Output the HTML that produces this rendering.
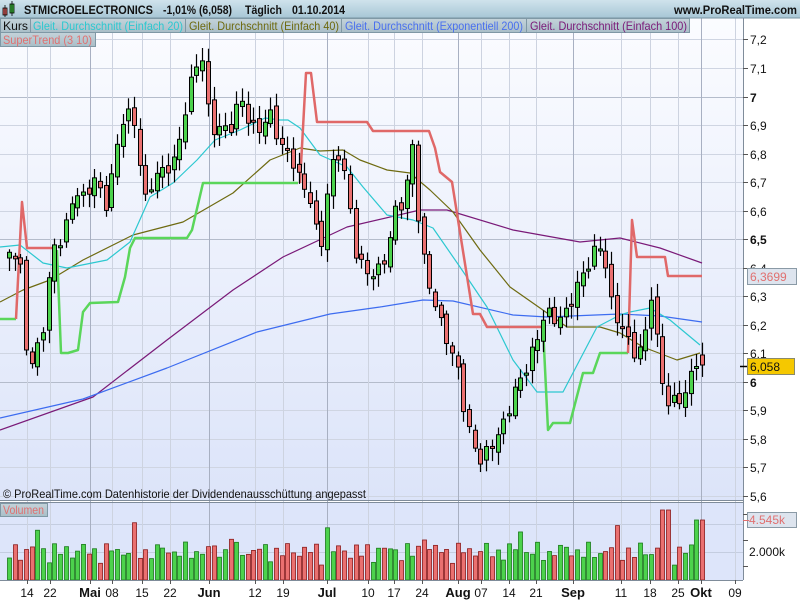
<!DOCTYPE html>
<html><head><meta charset="utf-8"><style>
*{margin:0;padding:0}
body{width:800px;height:600px;overflow:hidden;background:#fff;font-family:"Liberation Sans",sans-serif;}
svg{position:absolute;left:0;top:0}
</style></head><body>
<svg id="s" width="800" height="600" xmlns="http://www.w3.org/2000/svg" font-family="Liberation Sans, sans-serif">
<defs>
<linearGradient id="hd" x1="0" y1="0" x2="0" y2="1"><stop offset="0" stop-color="#cfe3ec"/><stop offset="1" stop-color="#a7c6d5"/></linearGradient>
<linearGradient id="bg" x1="0" y1="0" x2="0" y2="1"><stop offset="0" stop-color="#fbfcff"/><stop offset="1" stop-color="#dce4f9"/></linearGradient>
<linearGradient id="lg" x1="0" y1="0" x2="0" y2="1"><stop offset="0" stop-color="#c4d3da"/><stop offset="1" stop-color="#a9bec8"/></linearGradient>
</defs>
<rect x="0" y="0" width="800" height="600" fill="#fff"/>
<rect x="0" y="18" width="743" height="482" fill="url(#bg)"/>
<rect x="0" y="503" width="743" height="77" fill="#dde5fa"/>
<g id="grid"></g>
<g id="lines"></g>
<g id="candles"></g>
<g id="vol"></g>
<rect x="0" y="0" width="800" height="18" fill="url(#hd)"/>
<line x1="0" y1="18" x2="800" y2="18" stroke="#7a95a3"/>
<rect x="3" y="8" width="4" height="7" fill="#e66" stroke="#000" stroke-width="0.8"/>
<line x1="5" y1="5" x2="5" y2="17" stroke="#000" stroke-width="0.8"/>
<rect x="10" y="4" width="4" height="9" fill="#4c4" stroke="#000" stroke-width="0.8"/>
<line x1="12" y1="1" x2="12" y2="16" stroke="#000" stroke-width="0.8"/>
<g font-size="12" font-weight="bold" fill="#111">
<text x="24" y="14" textLength="129" lengthAdjust="spacingAndGlyphs">STMICROELECTRONICS</text>
<text x="163" y="14" textLength="69" lengthAdjust="spacingAndGlyphs">-1,01% (6,058)</text>
<text x="245" y="14" textLength="37" lengthAdjust="spacingAndGlyphs">Täglich</text>
<text x="292" y="14" textLength="53" lengthAdjust="spacingAndGlyphs">01.10.2014</text>
<text x="674" y="14" textLength="123" lengthAdjust="spacingAndGlyphs">www.ProRealTime.com</text>
</g>
<g font-size="12">
<rect x="0.5" y="18.5" width="30" height="14" fill="url(#lg)" stroke="#7f98a5"/><text x="3" y="30" fill="#111" textLength="25" lengthAdjust="spacingAndGlyphs">Kurs</text>
<rect x="30.5" y="18.5" width="155" height="14" fill="url(#lg)" stroke="#7f98a5"/><text x="33" y="30" fill="#2cc8d0" textLength="150" lengthAdjust="spacingAndGlyphs">Gleit. Durchschnitt (Einfach 20)</text>
<rect x="185.5" y="18.5" width="156" height="14" fill="url(#lg)" stroke="#7f98a5"/><text x="189" y="30" fill="#6e6a10" textLength="150" lengthAdjust="spacingAndGlyphs">Gleit. Durchschnitt (Einfach 40)</text>
<rect x="341.5" y="18.5" width="185" height="14" fill="url(#lg)" stroke="#7f98a5"/><text x="345" y="30" fill="#4a70ee" textLength="178" lengthAdjust="spacingAndGlyphs">Gleit. Durchschnitt (Exponentiell 200)</text>
<rect x="526.5" y="18.5" width="163" height="14" fill="url(#lg)" stroke="#7f98a5"/><text x="530" y="30" fill="#7a1a78" textLength="157" lengthAdjust="spacingAndGlyphs">Gleit. Durchschnitt (Einfach 100)</text>
<rect x="0.5" y="32.5" width="95" height="14" fill="url(#lg)" stroke="#7f98a5"/><text x="3" y="44" fill="#e07070" textLength="89" lengthAdjust="spacingAndGlyphs">SuperTrend (3 10)</text>
<rect x="0.5" y="503.5" width="47" height="13" fill="url(#lg)" stroke="#7f98a5"/><text x="3" y="514" fill="#e07070" textLength="41" lengthAdjust="spacingAndGlyphs">Volumen</text>
</g>
<text x="3" y="498" font-size="12" fill="#111" textLength="363" lengthAdjust="spacingAndGlyphs">© ProRealTime.com  Datenhistorie der Dividendenausschüttung angepasst</text>
<line x1="743.5" y1="18" x2="743.5" y2="580" stroke="#7f8c9a"/>
<line x1="0" y1="500.5" x2="743" y2="500.5" stroke="#7f8c9a"/>
<line x1="0" y1="502.5" x2="743" y2="502.5" stroke="#7f8c9a"/>
<line x1="0" y1="580.5" x2="743" y2="580.5" stroke="#7f8c9a"/>
<g id="axis" font-size="12" fill="#111"></g>
<rect x="747.5" y="268.5" width="49" height="16" fill="#dde4ee" stroke="#8a9aa6"/>
<text x="750" y="281" font-size="12" fill="#e07070">6,3699</text>
<rect x="747.5" y="358.5" width="47" height="16" fill="#f5c800" stroke="#8a8a6a"/>
<text x="750" y="371" font-size="12" fill="#111">6,058</text>
<line x1="740" y1="366.5" x2="747" y2="366.5" stroke="#000" stroke-width="1.5"/>
<rect x="747.5" y="512.5" width="49" height="15" fill="#dde4ee" stroke="#8a9aa6"/>
<text x="749" y="524" font-size="12" fill="#e07070">4.545k</text>
<text x="749" y="556" font-size="12" fill="#111">2.000k</text>
<line x1="743" y1="520.5" x2="749" y2="520.5" stroke="#e07070"/>
</svg>
<script>
var NS="http://www.w3.org/2000/svg";
function el(p,t,a,txt){var e=document.createElementNS(NS,t);for(var k in a)e.setAttribute(k,a[k]);if(txt)e.textContent=txt;document.getElementById(p).appendChild(e);return e;}
var py=[39,68,97,125,154,182,211,239,268,296,325,353,382,410,439,467,496];
var pl=["7,2","7,1","7","6,9","6,8","6,7","6,6","6,5","6,4","6,3","6,2","6,1","6","5,9","5,8","5,7","5,6"];
py.forEach(function(y,i){var b=(pl[i]=="7"||pl[i]=="6,5"||pl[i]=="6");
el("grid","line",{x1:0,x2:743,y1:y+.5,y2:y+.5,stroke:b?"#b4bccb":"#cfd5e2"});
el("axis","line",{x1:743,x2:748,y1:y+.5,y2:y+.5,stroke:"#555"});
el("axis","text",{x:750,y:y+5,"font-weight":b?"bold":"normal"},pl[i]);});
[524,552].forEach(function(y){el("grid","line",{x1:0,x2:743,y1:y+.5,y2:y+.5,stroke:"#c4cde0"});});
[514,540,566].forEach(function(y){el("axis","line",{x1:743,x2:748,y1:y+.5,y2:y+.5,stroke:"#555"});});
var dl=[[27,"14"],[50,"22"],[90,"Mai",1],[112,"08"],[142,"15"],[170,"22"],[209,"Jun",1],[255,"12"],[283,"19"],[327,"Jul",1],[368,"10"],[394,"17"],[422,"24"],[458,"Aug",1],[481,"07"],[509,"14"],[536,"21"],[573,"Sep",1],[621,"11"],[650,"18"],[678,"25"],[701,"Okt",1],[735,"09"]];
dl.forEach(function(d){
el("grid","line",{x1:d[0]+.5,x2:d[0]+.5,y1:18,y2:580,stroke:d[2]?"#a8b0c2":"#cdd3e0"});
el("axis","line",{x1:d[0]+.5,x2:d[0]+.5,y1:580,y2:584,stroke:"#555"});
el("axis","text",{x:d[0],y:597,"text-anchor":"middle","font-weight":d[2]?"bold":"normal","font-size":d[2]?13:12},d[1]);});
function pline(pts,col,w){el("lines","polyline",{points:pts.map(function(p){return p.join(",")}).join(" "),fill:"none",stroke:col,"stroke-width":w,"stroke-linejoin":"round"});}
pline([[0,430],[93,397],[167,340],[233,290],[283,257],[347,227],[420,210],[447,210],[513,230],[580,242],[620,238],[660,248],[702,263]],"#7a1a78",1.2);
pline([[0,418],[83,399],[167,368],[257,332],[330,314],[380,307],[423,300],[453,301],[513,315],[547,317],[620,314],[660,316],[702,322]],"#3d6cf0",1.2);
pline([[0,302],[23,290],[50,280],[83,260],[133,235],[183,222],[233,193],[270,160],[300,148],[320,151],[343,150],[360,160],[387,170],[410,173],[430,190],[453,212],[480,250],[510,287],[540,308],[567,327],[600,327],[620,333],[643,347],[677,360],[700,353]],"#6e6a10",1.2);
pline([[0,247],[20,245],[43,263],[67,268],[107,260],[130,242],[150,197],[173,183],[197,160],[215,140],[240,130],[265,118],[280,120],[288,120],[300,128],[320,155],[347,167],[363,187],[387,215],[413,220],[433,228],[460,267],[487,307],[513,360],[537,392],[563,392],[597,327],[620,315],[630,312],[650,308],[670,320],[700,345]],"#2cc8d0",1.2);
pline([[0,319],[16,319]],"#5ad65a",2.5);
pline([[16,319],[22,202],[27,248],[57,248]],"#e06868",2.5);
pline([[57,250],[61,353],[68,353],[78,350],[83,312],[90,303],[118,302],[125,277],[130,248],[135,238],[187,238],[192,230],[203,183],[298,183]],"#5ad65a",2.5);
pline([[300,183],[306,73],[311,73],[317,122],[367,122],[373,131],[429,131],[435,148],[440,172],[452,182],[473,314],[480,314],[487,327],[542,327]],"#e06868",2.5);
pline([[543,327],[548,430],[553,423],[570,423],[583,373],[593,373],[600,353],[620,353],[628,353]],"#5ad65a",2.5);
pline([[628,353],[632,220],[637,257],[665,257],[668,276],[702,276]],"#e06868",2.5);
var kp=[[5,262],[12,245],[20,270],[28,372],[35,355],[45,320],[52,250],[60,240],[68,220],[75,190],[85,200],[95,175],[105,210],[115,155],[125,110],[135,125],[145,200],[155,175],[165,170],[175,160],[185,110],[195,65],[203,58],[210,130],[220,128],[230,130],[240,95],[250,125],[258,130],[270,115],[280,145],[290,155],[300,180],[310,200],[320,250],[330,170],[340,150],[350,210],[357,260],[365,270],[372,275],[380,268],[388,250],[395,210],[405,200],[412,145],[420,240],[430,290],[440,320],[450,350],[458,370],[465,420],[472,440],[480,460],[488,450],[495,440],[505,420],[515,390],[525,370],[535,345],[545,310],[555,320],[565,315],[575,290],[585,270],[595,250],[602,245],[610,300],[618,320],[628,340],[638,360],[645,330],[652,290],[660,370],[667,405],[675,400],[685,395],[695,360],[702,365]];
function interp(x){for(var i=1;i<kp.length;i++){if(x<=kp[i][0]){var a=kp[i-1],b=kp[i];return a[1]+(b[1]-a[1])*(x-a[0])/(b[0]-a[0]);}}return kp[kp.length-1][1];}
var n=123,prev=258;
for(var i=0;i<n;i++){
var x=Math.round(702-(n-1-i)*5.68);
var c=interp(x)+(i==n-1?0:Math.sin(i*2.3)*6);
var o=prev+Math.sin(i*1.7)*4;
if(i==n-1){o=355;c=365;}
var up=c<o;
var hi=Math.min(o,c)-3-Math.abs(Math.sin(i*3.1))*10,lo=Math.max(o,c)+3+Math.abs(Math.cos(i*2.7))*10;
el("candles","line",{x1:x+.5,x2:x+.5,y1:hi,y2:lo,stroke:"#000","stroke-width":1.2});
var t=Math.min(o,c),h=Math.max(Math.abs(o-c),2);
el("candles","rect",{x:x-1.5,y:t,width:4,height:h,fill:up?"#4cd24c":"#ea7070",stroke:"#000","stroke-width":1});
var v=i==n-1?60:(i==n-2?60:12+Math.abs(Math.sin(i*1.37)*16)+Math.abs(Math.cos(i*0.71))*10);
if(i%17==5)v+=20;
if(i==n-8||i==n-7)v=70;
el("vol","rect",{x:x-1.5,y:580-v,width:4,height:v,fill:up?"#4cd24c":"#ea7070",stroke:up?"#1a7a1a":"#8a1a1a","stroke-width":0.8});
prev=c;}
</script>
</body></html>
